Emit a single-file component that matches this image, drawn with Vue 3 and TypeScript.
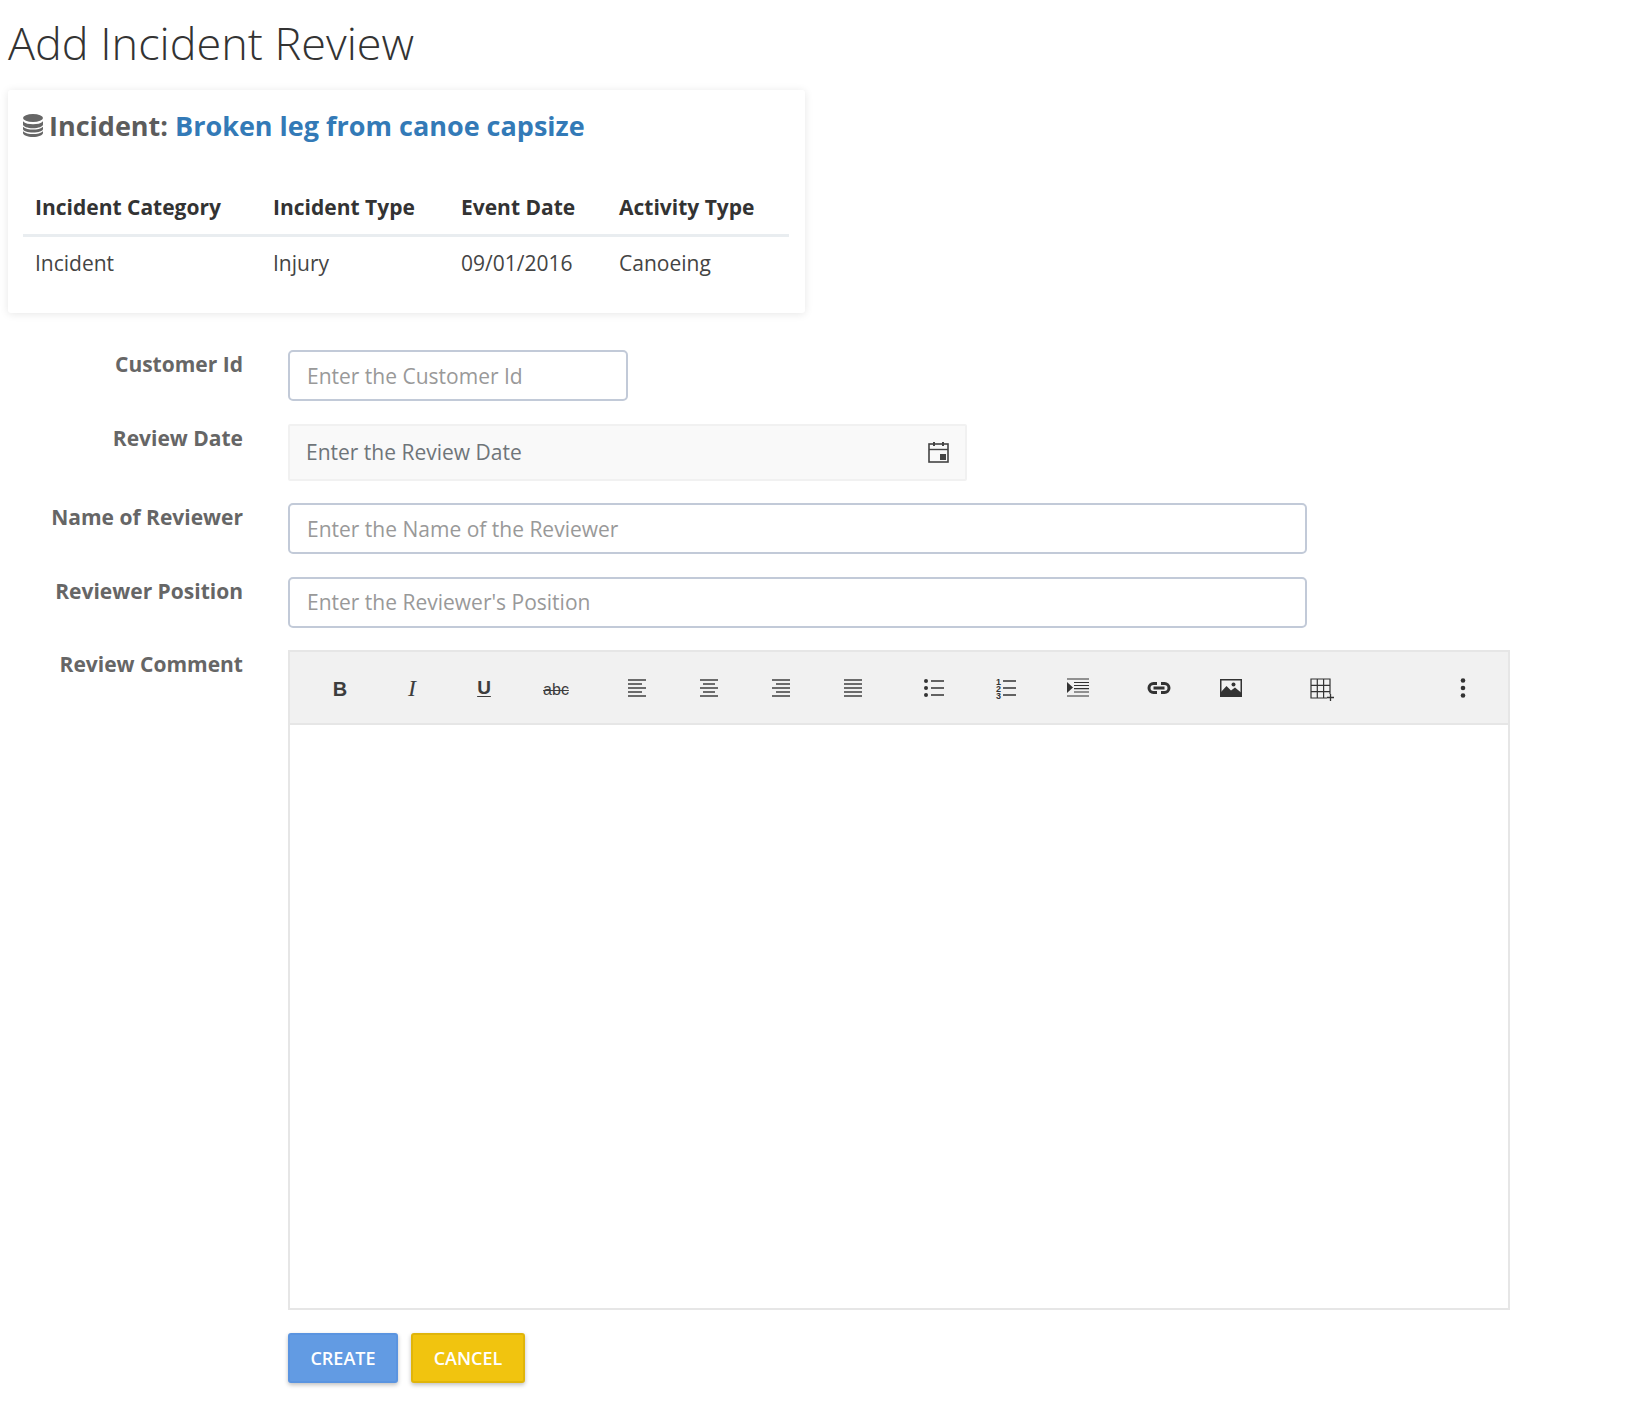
<script setup lang="ts">
const columns: string[] = ['Incident Category', 'Incident Type', 'Event Date', 'Activity Type']
const values: string[] = ['Incident', 'Injury', '09/01/2016', 'Canoeing']
const alignLeft: number[][] = [[0, 18], [0, 14], [0, 18], [0, 14], [0, 18]]
const alignCenter: number[][] = [[0, 18], [3, 15], [0, 18], [3, 15], [0, 18]]
const alignRight: number[][] = [[0, 18], [4, 18], [0, 18], [4, 18], [0, 18]]
const alignFull: number[][] = [[0, 18], [0, 18], [0, 18], [0, 18], [0, 18]]
const alignGroups = [alignLeft, alignCenter, alignRight, alignFull]
</script>

<template>
  <main class="page">
    <h1 class="title">Add Incident Review</h1>

    <section class="card">
      <h3 class="card-heading">
        <svg class="db" viewBox="0 0 20 23" width="20" height="23" aria-hidden="true">
          <ellipse cx="10" cy="4" rx="10" ry="4" />
          <path d="M0 7.2C2 9.6 6 10.2 10 10.2S18 9.6 20 7.2V10.5C20 12.6 15.5 14.2 10 14.2S0 12.6 0 10.5Z" />
          <path d="M0 12.8C2 15 6 15.6 10 15.6S18 15 20 12.8V15C20 17 15.5 18.6 10 18.6S0 17 0 15Z" />
          <path d="M0 17.2C2 19.4 6 20 10 20S18 19.4 20 17.2V19C20 21.2 15.5 23 10 23S0 21.2 0 19Z" />
        </svg>
        <span>Incident:</span>
        <a class="card-link" href="#">Broken leg from canoe capsize</a>
      </h3>
      <table class="info">
        <thead>
          <tr><th v-for="c in columns" :key="c">{{ c }}</th></tr>
        </thead>
        <tbody>
          <tr><td v-for="v in values" :key="v">{{ v }}</td></tr>
        </tbody>
      </table>
    </section>

    <form class="form" @submit.prevent>
      <div class="row">
        <label class="label">Customer Id</label>
        <input class="input short" placeholder="Enter the Customer Id" />
      </div>
      <div class="row">
        <label class="label">Review Date</label>
        <div class="date">
          <input class="date-input" placeholder="Enter the Review Date" readonly />
          <svg class="cal" viewBox="0 0 21 21" width="21" height="21" aria-hidden="true">
            <rect x="1" y="2" width="19" height="18" fill="none" stroke="#444" stroke-width="1.6" />
            <path d="M1 7.5H20" stroke="#444" stroke-width="1.4" />
            <path d="M6 0V4M15 0V4" stroke="#444" stroke-width="2" />
            <rect x="12" y="12" width="6" height="6" fill="#444" />
          </svg>
        </div>
      </div>
      <div class="row">
        <label class="label">Name of Reviewer</label>
        <input class="input wide" placeholder="Enter the Name of the Reviewer" />
      </div>
      <div class="row">
        <label class="label">Reviewer Position</label>
        <input class="input wide" placeholder="Enter the Reviewer's Position" />
      </div>
      <div class="row">
        <label class="label">Review Comment</label>
        <div class="editor">
          <div class="toolbar">
            <div class="group">
              <button class="tool" type="button"><span class="g-b">B</span></button>
              <button class="tool" type="button"><span class="g-i">I</span></button>
              <button class="tool" type="button"><span class="g-u">U</span></button>
              <button class="tool" type="button"><span class="g-s">abc</span></button>
            </div>
            <div class="group">
              <button v-for="(lines, i) in alignGroups" :key="i" class="tool" type="button">
                <svg viewBox="0 0 18 18" width="18" height="18" aria-hidden="true">
                  <path
                    v-for="(l, j) in lines"
                    :key="j"
                    :d="`M${l[0]} ${1 + j * 4}H${l[1]}`"
                    stroke="#333"
                    stroke-width="1.4"
                  />
                </svg>
              </button>
            </div>
            <div class="group">
              <button class="tool" type="button">
                <svg viewBox="0 0 20 18" width="20" height="18" aria-hidden="true">
                  <circle cx="2" cy="2" r="2" fill="#333" /><circle cx="2" cy="9" r="2" fill="#333" /><circle cx="2" cy="16" r="2" fill="#333" />
                  <path d="M7 2H20M7 9H20M7 16H20" stroke="#333" stroke-width="1.4" />
                </svg>
              </button>
              <button class="tool" type="button">
                <svg viewBox="0 0 20 20" width="20" height="20" aria-hidden="true">
                  <text x="0" y="7" class="num">1</text><text x="0" y="14" class="num">2</text><text x="0" y="21" class="num">3</text>
                  <path d="M7 3H20M7 10H20M7 17H20" stroke="#333" stroke-width="1.4" />
                </svg>
              </button>
              <button class="tool" type="button">
                <svg viewBox="0 0 22 19" width="22" height="19" aria-hidden="true">
                  <path d="M0 1H22M0 18H22M7 4.5H22M7 7.5H22M7 10.7H22M7 14H22" stroke="#333" stroke-width="1.2" />
                  <path d="M0 4L6 9.5L0 15Z" fill="#333" />
                </svg>
              </button>
            </div>
            <div class="group">
              <button class="tool" type="button">
                <svg viewBox="0 0 24 12" width="24" height="12" aria-hidden="true">
                  <path d="M10 1.5H6.5A4.5 4.5 0 0 0 6.5 10.5H10M14 1.5H17.5A4.5 4.5 0 0 1 17.5 10.5H14M6.5 6H17.5" fill="none" stroke="#333" stroke-width="3" />
                </svg>
              </button>
              <button class="tool" type="button">
                <svg viewBox="0 0 22 18" width="22" height="18" aria-hidden="true">
                  <rect x="0.75" y="0.75" width="20.5" height="16.5" fill="none" stroke="#333" stroke-width="1.5" />
                  <circle cx="13.5" cy="5.5" r="2" fill="#333" />
                  <path d="M1 17V13L6.5 7L11 11.5L15 8.5L21 13.5V17Z" fill="#333" />
                </svg>
              </button>
            </div>
            <div class="group last">
              <button class="tool" type="button">
                <svg viewBox="0 0 24 24" width="24" height="24" aria-hidden="true">
                  <path d="M1 3H20V22H1ZM1 9.3H20M1 15.6H20M7.3 3V22M13.6 3V22" fill="none" stroke="#333" stroke-width="1.2" />
                  <path d="M20.5 18V25M17 21.5H24" stroke="#f1f1f1" stroke-width="3.5" />
                  <path d="M20.5 18V25M17 21.5H24" stroke="#333" stroke-width="1.3" />
                </svg>
              </button>
            </div>
            <button class="tool more" type="button">
              <svg viewBox="0 0 6 20" width="6" height="20" aria-hidden="true">
                <circle cx="3" cy="2.5" r="2.3" fill="#333" /><circle cx="3" cy="10" r="2.3" fill="#333" /><circle cx="3" cy="17.5" r="2.3" fill="#333" />
              </svg>
            </button>
          </div>
          <div class="editor-body"></div>
        </div>
      </div>
      <div class="row">
        <span class="label"></span>
        <div class="actions">
          <button class="btn create" type="submit">Create</button>
          <button class="btn cancel" type="button">Cancel</button>
        </div>
      </div>
    </form>
  </main>
</template>

<style scoped>
.page {
  box-sizing: border-box;
  width: 1651px;
  height: 1411px;
  padding: 0 8px;
  font-family: "Open Sans", "Liberation Sans", sans-serif;
  font-size: 21px;
  color: #333;
  background: #fff;
  overflow: hidden;
}
.title {
  margin: 0;
  padding-top: 12px;
  height: 90px;
  box-sizing: border-box;
  font-size: 45px;
  line-height: 61px;
  font-weight: 300;
  color: #333;
}
.card {
  box-sizing: border-box;
  width: 797px;
  height: 223px;
  padding: 17px 15px 0;
  background: #fff;
  border-radius: 3px;
  box-shadow: 0 1px 8px rgba(0, 0, 0, 0.1);
}
.card-heading {
  display: flex;
  align-items: center;
  gap: 6px;
  margin: 0;
  height: 36px;
  font-size: 27px;
  font-weight: 700;
  color: #5c5c5c;
  white-space: nowrap;
}
.db { fill: #666; flex: none; }
.card-link { color: #337ab7; text-decoration: none; margin-left: 1px; }
.info {
  margin-top: 50px;
  width: 766px;
  border-collapse: collapse;
  table-layout: fixed;
}
.info th:nth-child(1), .info td:nth-child(1) { width: 238px; }
.info th:nth-child(2), .info td:nth-child(2) { width: 188px; }
.info th:nth-child(3), .info td:nth-child(3) { width: 158px; }
.info th, .info td {
  box-sizing: border-box;
  padding: 0 12px;
  text-align: left;
  white-space: nowrap;
}
.info th {
  height: 41px;
  padding-bottom: 13px;
  font-weight: 700;
  border-bottom: 3px solid #e9edf0;
  color: #333;
}
.info td {
  height: 54px;
  color: #444;
}
.form {
  display: flex;
  flex-direction: column;
  gap: 22.5px;
  margin-top: 37px;
}
.row { display: flex; align-items: flex-start; gap: 45px; }
.label {
  flex: none;
  width: 235px;
  text-align: right;
  font-weight: 700;
  line-height: 28px;
  color: #666;
}
.input {
  box-sizing: border-box;
  height: 51px;
  padding: 0 17px;
  border: 2px solid #c2cad8;
  border-radius: 5px;
  font: inherit;
  color: #333;
  background: #fff;
  outline: none;
}
.input::placeholder { color: #999; opacity: 1; }
.short { width: 340px; }
.wide { width: 1019px; }
.date {
  box-sizing: border-box;
  display: flex;
  align-items: center;
  justify-content: space-between;
  width: 679px;
  height: 57px;
  padding: 0 16px;
  background: #f9f9f9;
  border: 2px solid #f1f1f1;
  border-radius: 2px;
}
.date-input {
  flex: 1;
  min-width: 0;
  padding: 0;
  border: 0;
  background: transparent;
  font: inherit;
  outline: none;
}
.date-input::placeholder { color: #6f7579; opacity: 1; }
.cal { flex: none; }
.editor {
  box-sizing: border-box;
  width: 1222px;
  height: 660px;
  display: flex;
  flex-direction: column;
}
.toolbar {
  box-sizing: border-box;
  display: flex;
  align-items: center;
  height: 75px;
  padding: 0 9px 0 14px;
  background: #f1f1f1;
  border: 2px solid #e6e6e6;
  color: #3d3d3d;
}
.group { display: flex; margin-right: 9px; }
.group.last { margin-left: 10px; margin-right: 0; }
.tool {
  display: flex;
  align-items: center;
  justify-content: center;
  width: 72px;
  height: 71px;
  padding: 0;
  border: 0;
  background: transparent;
  color: #3d3d3d;
}
.tool svg { overflow: visible; }
.more { margin-left: auto; }
.g-b { font: 700 20px "Liberation Sans", Arial, sans-serif; padding-top: 3px; }
.g-i { font: italic 400 24px "Liberation Serif", serif; padding-top: 2px; }
.g-u { font: 700 19px "Liberation Sans", Arial, sans-serif; text-decoration: underline; text-underline-offset: 2px; }
.g-s { font: 400 16px "Liberation Sans", Arial, sans-serif; text-decoration: line-through; padding-top: 4px; }
.num { font: 700 9px "Liberation Sans", Arial, sans-serif; fill: #333; }
.editor-body {
  flex: 1;
  border: 2px solid #e6e6e6;
  border-top: 0;
  background: #fff;
}
.actions { display: flex; gap: 13px; }
.btn {
  box-sizing: border-box;
  height: 50px;
  border: 2px solid transparent;
  border-radius: 3px;
  font: 600 18px "Open Sans", "Liberation Sans", sans-serif;
  text-transform: uppercase;
  color: #fff;
  box-shadow: 0 2px 4px rgba(0, 0, 0, 0.25);
}
.create { width: 110px; background: #629be3; border-color: #5a94e0; }
.cancel { width: 114px; background: #f1c40f; border-color: #e0b50a; }
</style>

<style>
html, body { margin: 0; background: #fff; }
</style>
